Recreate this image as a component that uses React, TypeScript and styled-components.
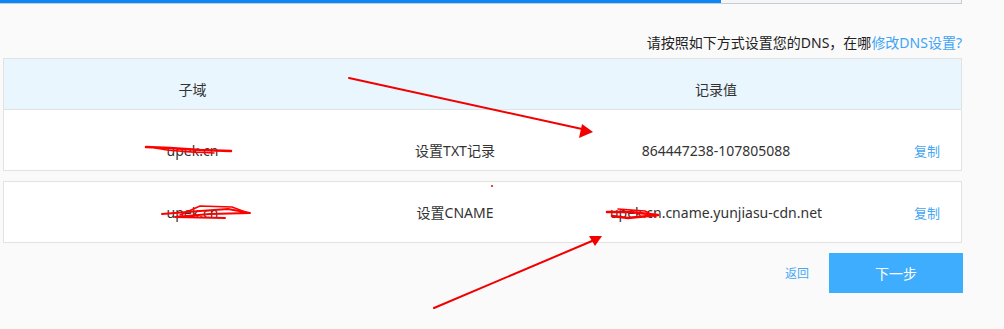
import styled, { createGlobalStyle } from 'styled-components';

const GlobalStyle = createGlobalStyle`
    html, body {
        margin: 0;
        padding: 0;
        background: #fafafa;
    }

    body {
        font-family: "Noto Sans", "Noto Sans CJK SC", sans-serif;
        font-size: 14px;
        color: #333;
    }
`;

interface DnsRecord {
    name: string;
    type: string;
    value: string;
}

const records: DnsRecord[] = [
    { name: 'upek.cn', type: '设置TXT记录', value: '864447238-107805088' },
    { name: 'upek.cn', type: '设置CNAME', value: 'upek.cn.cname.yunjiasu-cdn.net' },
];

const App = () => {
    return (
        <>
        <GlobalStyle />
        <Page>
            <Progress>
                <ProgressFill style={{ width: `${(722 / 962) * 100}%` }} />
            </Progress>

            <Hint>
                请按照如下方式设置您的DNS，在哪<HintLink href="#">修改DNS设置?</HintLink>
            </Hint>

            <Table>
                <HeaderRow>
                    <Cell>子域</Cell>
                    <Cell />
                    <Cell>记录值</Cell>
                    <Cell />
                </HeaderRow>
                <BodyRow $offset={10}>
                    <Cell>{records[0].name}</Cell>
                    <Cell>{records[0].type}</Cell>
                    <Cell>{records[0].value}</Cell>
                    <CopyCell>复制</CopyCell>
                </BodyRow>
            </Table>

            <Card>
                <BodyRow $offset={0}>
                    <Cell>{records[1].name}</Cell>
                    <Cell>{records[1].type}</Cell>
                    <Cell>{records[1].value}</Cell>
                    <CopyCell>复制</CopyCell>
                </BodyRow>
            </Card>

            <Actions>
                <BackLink href="#">返回</BackLink>
                <NextButton>下一步</NextButton>
            </Actions>

            <Annotations width="1004" height="329" viewBox="0 0 1004 329">
                <g stroke="#f20000" strokeWidth="2" fill="none" strokeLinecap="round">
                    <line x1="349" y1="78" x2="582" y2="129" />
                    <line x1="434" y1="308" x2="592" y2="241" />
                </g>
                <g fill="#f20000">
                    <polygon points="593,132 579,138 582,124" />
                    <polygon points="602,236 595,246 589,236" />
                    <circle cx="492" cy="186" r="1" />
                </g>
                <g stroke="#f00" fill="none" strokeLinecap="round" strokeLinejoin="round">
                    <path d="M146 147 L170 148 L200 150 L231 151" strokeWidth="2.5" />
                    <path d="M155 148 C170 151, 185 152, 214 153" strokeWidth="1.5" />
                    <path d="M162 214 L200 211 L228 209 L250 213 L210 214 L175 217 L225 218" strokeWidth="2" />
                    <path d="M180 215 L200 206 L232 207 L248 213" strokeWidth="1.5" />
                    <path d="M607 212 L630 212 L658 215 L628 218 L612 216" strokeWidth="2.5" />
                    <path d="M618 209 L645 211 L656 217" strokeWidth="1.5" />
                </g>
            </Annotations>
        </Page>
        </>
    );
};

const Page = styled.div`
    position: relative;
    width: 1004px;
    height: 329px;
    overflow: hidden;
`;

const Progress = styled.div`
    width: 962px;
    height: 4px;
    box-sizing: border-box;
    border-right: 1px solid #c8ccd2;
    border-bottom: 1px solid #c8ccd2;
    background: #f4f5f6;
`;

const ProgressFill = styled.div`
    height: 3px;
    background: #0a88f5;
`;

const Hint = styled.div`
    width: 962px;
    margin-top: 29px;
    text-align: right;
    line-height: 19px;
    color: #222;
`;

const HintLink = styled.a`
    color: #40a4f5;
    text-decoration: none;
`;

const Table = styled.div`
    margin: 6px 0 0 3px;
    width: 959px;
    box-sizing: border-box;
    border: 1px solid #e2e2e2;
    background: #fff;
`;

const Card = styled(Table)`
    margin-top: 10px;
`;

const Row = styled.div`
    display: grid;
    grid-template-columns: 377px 148px 374px 1fr;
    align-items: center;
`;

const HeaderRow = styled(Row)`
    height: 51px;
    padding-top: 10px;
    box-sizing: border-box;
    background: #e9f6fe;
    border-bottom: 1px solid #e2e2e2;
`;

const BodyRow = styled(Row)<{ $offset: number }>`
    height: 60px;
    box-sizing: border-box;
    padding-top: ${props => props.$offset * 2}px;
`;

const Cell = styled.div`
    text-align: center;
    white-space: nowrap;
`;

const CopyCell = styled.div`
    padding-left: 11px;
    color: #45a6f2;
    font-size: 13px;
`;

const Actions = styled.div`
    width: 963px;
    margin-top: 10px;
    display: flex;
    justify-content: flex-end;
    align-items: center;
    gap: 20px;
`;

const BackLink = styled.a`
    color: #48a8f4;
    font-size: 12px;
    text-decoration: none;
`;

const NextButton = styled.button`
    width: 134px;
    height: 40px;
    border: none;
    background: #3fadfd;
    color: #fff;
    font-family: inherit;
    font-size: 14px;
`;

const Annotations = styled.svg`
    position: absolute;
    left: 0;
    top: 0;
    pointer-events: none;
`;

export default App;
